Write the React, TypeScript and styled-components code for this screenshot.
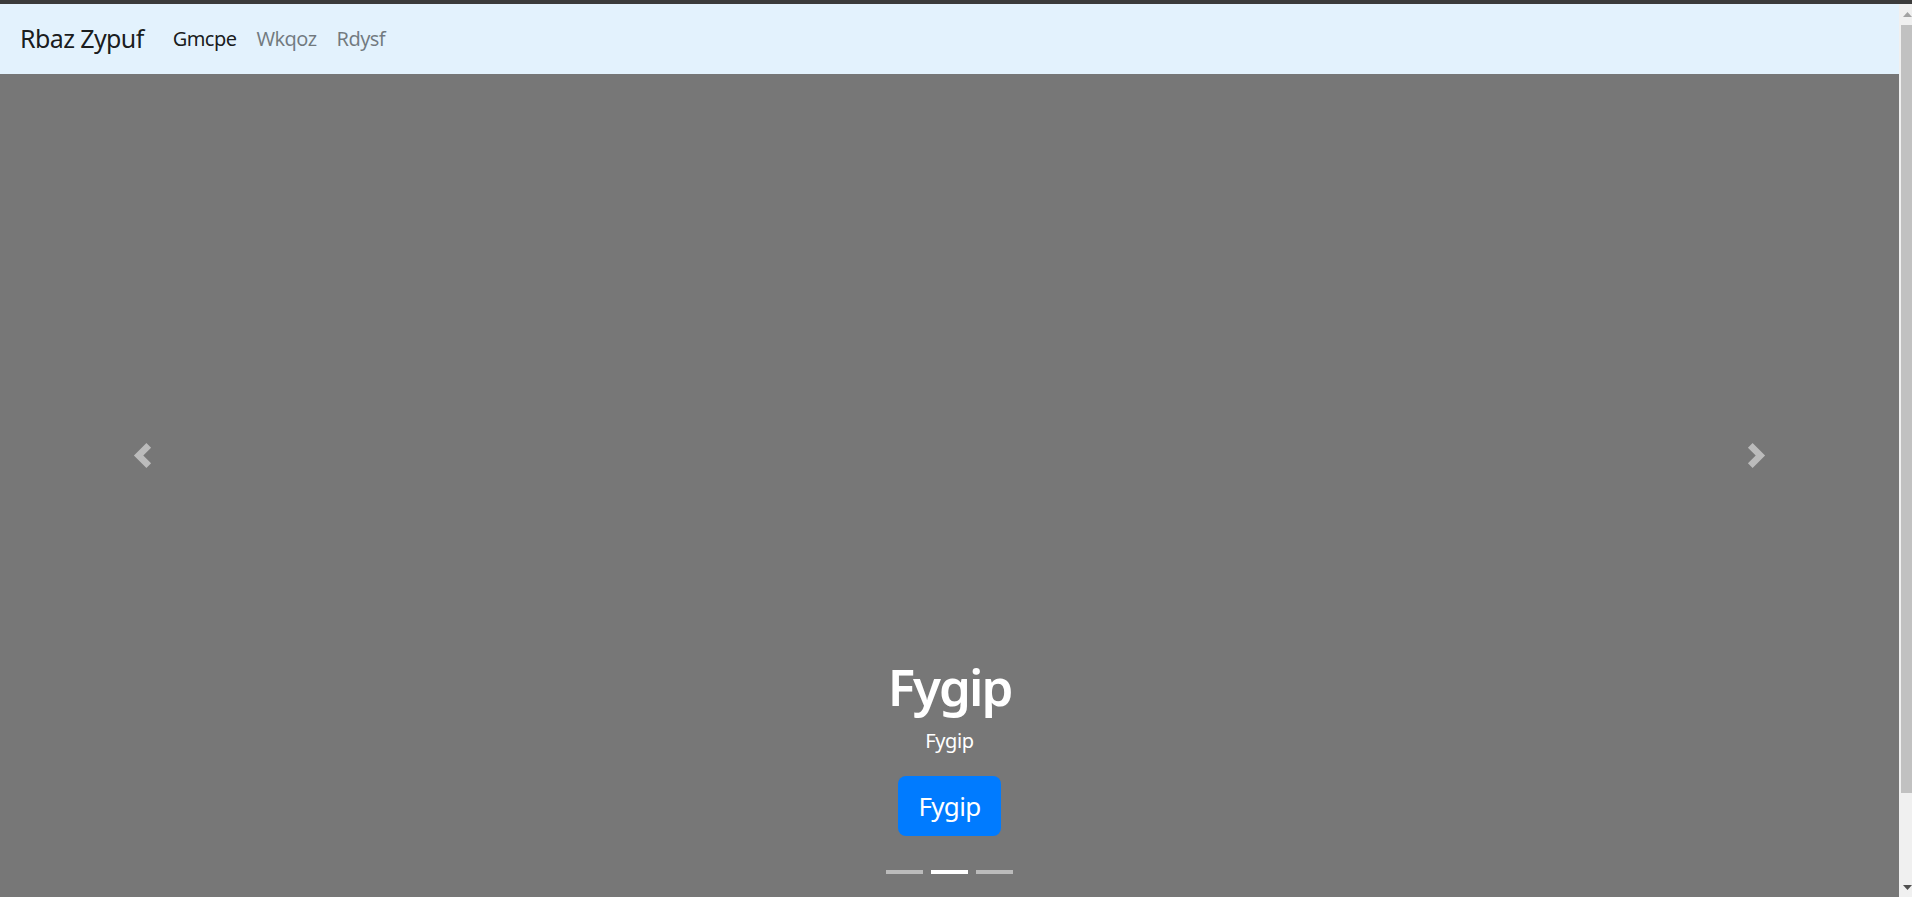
import React from "react";
import styled, { createGlobalStyle } from "styled-components";

const GlobalStyle = createGlobalStyle`
  html, body {
    margin: 0;
    padding: 0;
    height: 100%;
    overflow: hidden;
    background: #ffffff;
  }
  body {
    font-family: "Noto Sans", "Open Sans", "Liberation Sans", sans-serif;
  }
  *, *::before, *::after { box-sizing: border-box; }
`;

const Window = styled.div`
  display: flex;
  flex-direction: column;
  height: 100vh;
`;

const WindowStrip = styled.div`
  height: 4px;
  background: #3b3b3b;
  flex-shrink: 0;
`;

const WindowBody = styled.div`
  flex: 1;
  min-height: 0;
  display: flex;
`;

const Viewport = styled.main`
  flex: 1;
  min-width: 0;
  overflow: hidden;
`;

/* Browser scrollbar rail, as seen in the screenshot */
const Rail = styled.div`
  width: 13px;
  flex-shrink: 0;
  display: flex;
  flex-direction: column;
  background: #f0f0f0;
`;

const RailButton = styled.div<{ $h: number }>`
  height: ${(p) => p.$h}px;
  flex-shrink: 0;
  display: flex;
  align-items: center;
  padding-left: 4px;
`;

const RailTrack = styled.div`
  flex: 1;
  min-height: 0;
  padding-left: 2px;
`;

const RailThumb = styled.div`
  height: 768px;
  background: #c1c1c1;
`;

const Stage = styled.div`
  position: relative;
`;

const Navbar = styled.nav`
  position: absolute;
  top: 0;
  left: 0;
  right: 0;
  z-index: 5;
  height: 70px;
  display: flex;
  align-items: center;
  padding: 10px 20px;
  background: #e3f2fd;
`;

const Brand = styled.a`
  font-size: 25px;
  line-height: 37.5px;
  padding: 6px 0;
  margin-right: 19px;
  color: rgba(0, 0, 0, 0.9);
  text-decoration: none;
  letter-spacing: -0.6px;
  white-space: nowrap;
`;

const NavList = styled.ul`
  display: flex;
  list-style: none;
  margin: 0;
  padding: 0;
`;

const NavLink = styled.a<{ $active?: boolean }>`
  display: block;
  font-size: 20px;
  line-height: 30px;
  padding: 10px;
  letter-spacing: -0.55px;
  text-decoration: none;
  color: ${(p) => (p.$active ? "rgba(0, 0, 0, 0.9)" : "rgba(0, 0, 0, 0.5)")};
`;

const Carousel = styled.section`
  position: relative;
  height: 902px;
  background: #777777;
  overflow: hidden;
`;

const Control = styled.a<{ $side: "left" | "right" }>`
  position: absolute;
  top: 0;
  bottom: 0;
  ${(p) => (p.$side === "left" ? "left: 0;" : "right: 0;")}
  width: 15%;
  display: flex;
  align-items: center;
  justify-content: center;
  opacity: 0.5;
  cursor: pointer;
`;

const ControlIcon = styled.svg`
  width: 25px;
  height: 25px;
  display: block;
`;

const Caption = styled.div`
  position: absolute;
  left: 15%;
  right: 15%;
  bottom: 70px;
  display: flex;
  flex-direction: column;
  align-items: center;
  text-align: center;
  color: #ffffff;
`;

const Title = styled.h2`
  margin: 0 0 8px;
  font-size: 51px;
  line-height: 64px;
  font-weight: 600;
  letter-spacing: -2px;
`;

const Subtitle = styled.p`
  margin: 0 0 20px;
  font-size: 20px;
  line-height: 30px;
  letter-spacing: -0.4px;
`;

const ActionButton = styled.button`
  font-family: inherit;
  font-size: 26px;
  line-height: 40px;
  padding: 10px 21px;
  border: 0;
  border-radius: 8px;
  background: #007bff;
  color: #ffffff;
  letter-spacing: -0.7px;
  cursor: pointer;
`;

const Indicators = styled.ol`
  position: absolute;
  left: 15%;
  right: 15%;
  bottom: 0;
  margin: 0 0 20px;
  padding: 0;
  list-style: none;
  display: flex;
  justify-content: center;
  z-index: 3;
`;

const Indicator = styled.li<{ $active?: boolean }>`
  width: 37px;
  height: 28px;
  margin: 0 4px;
  border-top: 12px solid transparent;
  border-bottom: 12px solid transparent;
  background-clip: padding-box;
  background-color: #ffffff;
  opacity: ${(p) => (p.$active ? 1 : 0.5)};
`;

export default function App() {
  return (
    <>
      <GlobalStyle />
      <Window>
        <WindowStrip />
        <WindowBody>
          <Viewport>
            <Stage>
              <Navbar>
                <Brand href="#">Rbaz Zypuf</Brand>
                <NavList>
                  <li>
                    <NavLink href="#" $active>
                      Gmcpe
                    </NavLink>
                  </li>
                  <li>
                    <NavLink href="#">Wkqoz</NavLink>
                  </li>
                  <li>
                    <NavLink href="#">Rdysf</NavLink>
                  </li>
                </NavList>
              </Navbar>
              <Carousel>
                <Control $side="left">
                  <ControlIcon viewBox="0 0 8 8">
                    <path fill="#fff" d="M5.25 0l-4 4 4 4 1.5-1.5-2.5-2.5 2.5-2.5-1.5-1.5z" />
                  </ControlIcon>
                </Control>
                <Control $side="right">
                  <ControlIcon viewBox="0 0 8 8">
                    <path fill="#fff" d="M2.75 0l-1.5 1.5 2.5 2.5-2.5 2.5 1.5 1.5 4-4-4-4z" />
                  </ControlIcon>
                </Control>
                <Caption>
                  <Title>Fygip</Title>
                  <Subtitle>Fygip</Subtitle>
                  <ActionButton>Fygip</ActionButton>
                </Caption>
                <Indicators>
                  <Indicator />
                  <Indicator $active />
                  <Indicator />
                </Indicators>
              </Carousel>
            </Stage>
          </Viewport>
          <Rail>
            <RailButton $h={21}>
              <svg width="9" height="5" viewBox="0 0 9 5">
                <polygon points="0,5 4.5,0 9,5" fill="#a3a3a3" />
              </svg>
            </RailButton>
            <RailTrack>
              <RailThumb />
            </RailTrack>
            <RailButton $h={20}>
              <svg width="9" height="5" viewBox="0 0 9 5">
                <polygon points="0,0 9,0 4.5,5" fill="#505050" />
              </svg>
            </RailButton>
          </Rail>
        </WindowBody>
      </Window>
    </>
  );
}
